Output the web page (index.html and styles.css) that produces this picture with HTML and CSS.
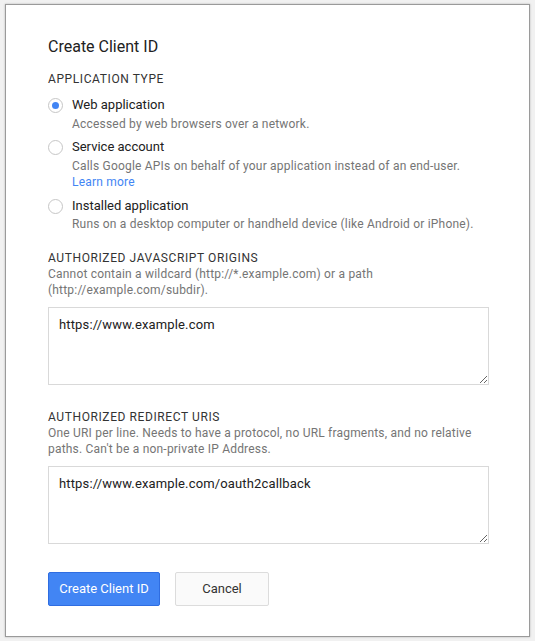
FILE: index.html
```html
<!DOCTYPE html>
<html>
<head>
<meta charset="utf-8">
<link rel="stylesheet" href="styles.css">
</head>
<body>
<div class="dialog">
  <h1 class="title">Create Client ID</h1>
  <div class="section-label">Application type</div>
  <div class="options">
    <label class="option">
      <span class="radio checked"></span>
      <span class="option-text">
        <span class="option-name">Web application</span>
        <span class="option-desc">Accessed by web browsers over a network.</span>
      </span>
    </label>
    <label class="option">
      <span class="radio"></span>
      <span class="option-text">
        <span class="option-name">Service account</span>
        <span class="option-desc">Calls Google APIs on behalf of your application instead of an end-user.<br><a class="link" href="#">Learn more</a></span>
      </span>
    </label>
    <label class="option">
      <span class="radio"></span>
      <span class="option-text">
        <span class="option-name">Installed application</span>
        <span class="option-desc">Runs on a desktop computer or handheld device (like Android or iPhone).</span>
      </span>
    </label>
  </div>

  <div class="field first">
    <div class="section-label">Authorized JavaScript origins</div>
    <div class="field-desc">Cannot contain a wildcard (http://*.example.com) or a path (http://example.com/subdir).</div>
    <textarea class="input">https://www.example.com</textarea>
  </div>

  <div class="field second">
    <div class="section-label">Authorized redirect URIs</div>
    <div class="field-desc">One URI per line. Needs to have a protocol, no URL fragments, and no relative paths. Can't be a non-private IP Address.</div>
    <textarea class="input">https://www.example.com/oauth2callback</textarea>
  </div>

  <div class="actions">
    <button class="btn primary">Create Client ID</button>
    <button class="btn secondary">Cancel</button>
  </div>
</div>
</body>
</html>
```
FILE: styles.css
```css
html, body {
  margin: 0;
  padding: 0;
}
body {
  background: #f1f1f1;
  font-family: Roboto, "Liberation Sans", Arial, sans-serif;
  width: 535px;
  height: 641px;
  overflow: hidden;
}
.dialog {
  box-sizing: border-box;
  margin: 4px 0 0 5px;
  width: 525px;
  height: 633px;
  background: #fff;
  border: 1px solid #9a9a9a;
  box-shadow: 0 0 2px rgba(0,0,0,0.25);
  padding: 32px 42px 0 42px;
}
.title {
  margin: 0;
  font-size: 16px;
  font-weight: 400;
  line-height: 20px;
  color: #212121;
}
.section-label {
  font-size: 12px;
  line-height: 16px;
  text-transform: uppercase;
  letter-spacing: 0.6px;
  color: #333;
}
.dialog > .section-label {
  margin-top: 14px;
}
.options {
  margin-top: 9px;
  display: flex;
  flex-direction: column;
  gap: 6px;
}
.option {
  display: flex;
  align-items: flex-start;
  gap: 9px;
}
.radio {
  box-sizing: border-box;
  flex: none;
  width: 15px;
  height: 15px;
  margin-top: 2px;
  border: 1px solid #c6c6c6;
  border-radius: 50%;
  background: #fff;
  display: flex;
  align-items: center;
  justify-content: center;
}
.radio.checked::after {
  content: "";
  width: 7px;
  height: 7px;
  border-radius: 50%;
  background: #4285f4;
}
.option-text {
  display: flex;
  flex-direction: column;
}
.option-name {
  font-size: 13px;
  line-height: 18px;
  color: #212121;
}
.option-desc, .field-desc {
  font-size: 12px;
  line-height: 16.5px;
  letter-spacing: 0.2px;
  color: #757575;
}
.option-desc {
  margin-top: 1.5px;
}
.link {
  color: #4285f4;
  text-decoration: none;
}
.field.first {
  margin-top: 17px;
}
.field.second {
  margin-top: 24px;
}
.input {
  display: block;
  box-sizing: border-box;
  width: 441px;
  height: 78px;
  margin-top: 8px;
  padding: 8px 10px;
  border: 1px solid #d9d9d9;
  font-family: Roboto, "Liberation Sans", Arial, sans-serif;
  font-size: 13px;
  letter-spacing: 0.15px;
  line-height: 18px;
  color: #212121;
  background: #fff;
  outline: none;
}
.actions {
  margin-top: 28px;
  display: flex;
  gap: 15px;
}
.btn {
  box-sizing: border-box;
  height: 34px;
  border-radius: 2px;
  font-family: Roboto, "Liberation Sans", Arial, sans-serif;
  font-size: 13px;
  padding: 0;
}
.primary {
  width: 112px;
  background: #4285f4;
  border: 1px solid #2f6de1;
  color: #fff;
}
.secondary {
  width: 94px;
  background: #fafafa;
  border: 1px solid #dcdcdc;
  color: #333;
}
```
